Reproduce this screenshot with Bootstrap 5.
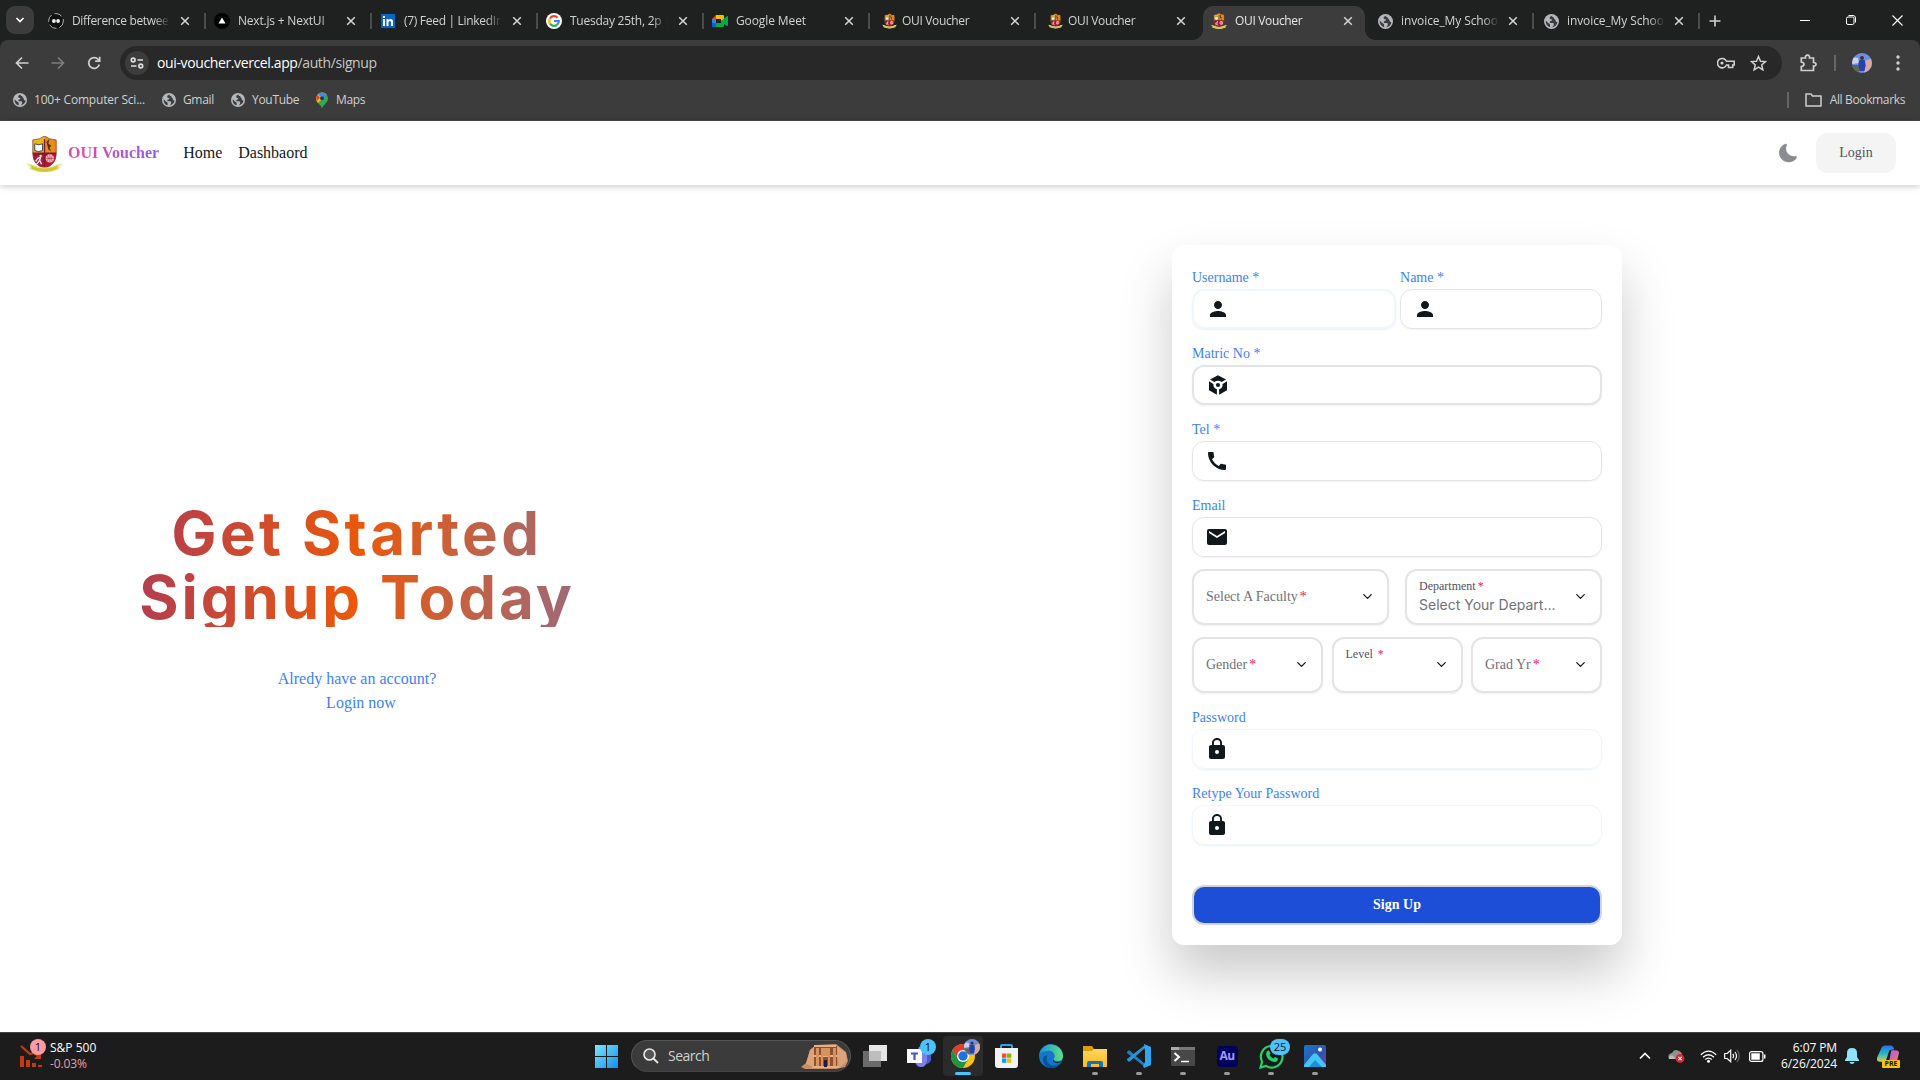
<!DOCTYPE html>
<html lang="en">
<head>
<meta charset="utf-8">
<title>OUI Voucher</title>
<link rel="stylesheet" href="https://cdn.jsdelivr.net/npm/bootstrap@5.3.0/dist/css/bootstrap.min.css">
<style>
  body{width:1920px;height:1080px;overflow:hidden;background:#fff;font-family:"Liberation Serif",serif;color:#11181c}
  svg{display:block;flex:none}
  .ui{font-family:"Open Sans","Noto Sans",sans-serif;font-size:12px;line-height:16px}
  /* browser chrome */
  .strip{height:40px;background:#1f2120;color:#d0d3d2}
  .tabsearch{width:28px;height:28px;border-radius:9px;background:#3c3c3c;margin:0 4px 0 6px}
  .tab-item{width:166px;height:34px;padding:0 14px 4px 10px;position:relative}
  .tab-item + .tab-item::before,.tab-end::before{content:"";position:absolute;left:0;top:7px;width:1.5px;height:16px;background:#4a4b4b}
  .tab-item.active-tab{background:#3c3c3c;border-radius:10px 10px 0 0;margin:0 1px 0 3px;padding-left:8px;padding-right:12px;width:162px;color:#e8e8e8}
  .tab-item.active-tab::before{display:none}
  .tab-item.active-tab::after{content:"";position:absolute;left:-10px;right:-10px;bottom:0;height:10px;background:radial-gradient(circle at 0 0,transparent 9.5px,#3c3c3c 10px) left/10px 10px no-repeat,radial-gradient(circle at 100% 0,transparent 9.5px,#3c3c3c 10px) right/10px 10px no-repeat}
  .tab-item.plain-edge::before{display:none}
  .tab-title{width:98px;margin-left:8px;white-space:nowrap;overflow:hidden;letter-spacing:-.34px;-webkit-mask-image:linear-gradient(90deg,#000 84%,transparent)}
  .tab-title.loose{letter-spacing:-.1px;margin-left:8px}
  .toolbar-box{height:46px;background:#3c3c3c;border-radius:8px 8px 0 0;color:#c7c7c7}
  .omni{width:1662px;height:34px;border-radius:17px;background:#282828;font-size:14px;letter-spacing:-.38px}
  .site-btn{width:24px;height:24px;border-radius:12px;background:#3c3c3c}
  .marks{height:35px;background:#3c3c3c;color:#d0d0d0;border-bottom:1px solid #4a4a4a}
  .vline{width:1.5px;height:16px;background:#656565}
  /* site header */
  .site-nav{height:64px;box-shadow:0 1px 7px rgba(0,0,0,.24);font-size:16px}
  .brand-text{font-weight:700;font-size:16px;background:linear-gradient(90deg,#ec4899,#8b5cf6);-webkit-background-clip:text;background-clip:text;color:transparent}
  .login-btn{width:80px;height:40px;border-radius:12px;background:#f4f4f5;color:#52525b;font-size:14px;padding-bottom:2px}
  .page-main{height:847px}
  .hero-col{width:714px}
  .hero-title{font:700 60px/64px Inter,sans-serif;letter-spacing:2.950px;height:126px;margin:0;background:linear-gradient(96deg,#b13c53 0,#ea580c 50%,#9d6a79 100%);-webkit-background-clip:text;background-clip:text;color:transparent}
  .hero-title span{letter-spacing:3.350px}
  .blue{color:#3b82f6}
  .form-card{width:450px;height:700px;padding:20px;border-radius:12px;background:#fff;margin:60px 0 0 458px;box-shadow:0 29px 52px rgba(0,0,0,.21)}
  .lbl{height:24px;line-height:24px;padding-top:1px;font-size:14px;color:#3b82f6;display:block}
  .box{height:40px;border-radius:12px;border:1px solid #e4e4e7;padding:0 12px;box-shadow:0 1px 2px rgba(0,0,0,.06)}
  .box-thick{border:2px solid #e4e4e7}
  .box-pale{border-color:#eff6ff}
  .pick{height:56px;border-radius:12px;border:2px solid #e4e4e4;padding:0 12px 2px 12px;box-shadow:0 1px 2px rgba(0,0,0,.06);font-size:14px;color:#71717a;flex:1 1 0;min-width:0}
  .pick i{color:#f31260;font-style:normal;margin-left:2px}
  .mini{font-size:12px;line-height:16px;color:#52525b}
  .signup-btn{height:40px;border-radius:12px;border:2px solid #d4d4d8;background:#1d4ed8;color:#fff;font-weight:700;font-size:14px;margin-top:40px;padding-bottom:2px}
  /* taskbar */
  .taskbar{height:48px;background:#1c1c1c;border-top:1px solid #424242;color:#fff;padding-bottom:1px}
  .cell{width:44px;height:46px;position:relative}
  .run::after{content:"";position:absolute;left:19px;bottom:4px;width:6px;height:3px;border-radius:2px;background:#9a9a9a}
  .lit{width:40px;height:40px;margin:0 2px;border-radius:4px;background:#2b2b2b;position:relative}
  .lit::after{content:"";position:absolute;left:12px;bottom:1px;width:16px;height:3px;border-radius:2px;background:#4cc2ff}
  .tag{position:absolute;background:#4cc2ff;color:#111;font-size:11px;line-height:16px;height:16px;border-radius:8px;text-align:center}
  .searchbox{width:220px;height:32px;border-radius:16px;background:#3b3b3b;border:1px solid #555;border-bottom-color:#444;font-size:14px;color:#d0d0d0;margin:0 12px 0 13px;padding:0 2px 0 11px}
</style>
<script src="https://cdn.jsdelivr.net/npm/bootstrap@5.3.0/dist/js/bootstrap.bundle.min.js"></script>
</head>
<body>
<svg width="0" height="0" class="position-absolute">
  <defs>
    <symbol id="crest" viewBox="0 0 38 37">
      <path d="M7 4Q14 4 19 0Q24 4 31 4V19H7z" fill="#e9b818"/><path d="M19 0Q24 4 31 4V19H19z" fill="#ee8a1c"/>
      <path d="M7 18H31Q31 30 19 33Q7 30 7 18z" fill="#b3163b"/><path d="M7 17h24v2H7zM18.300 3h1.400v28h-1.400z" fill="#7d1c2c"/><path d="M7 4Q14 4 19 0Q24 4 31 4V18Q31 30 19 33Q7 30 7 18z" fill="none" stroke="#8a3a22" stroke-width=".8"/>
      <path d="M9 8l4 1 4-1v7l-4 1-4-1z" fill="#fff" stroke="#31455c" stroke-width="1"/><path d="M21 6l3-3-1 5 3 2-2 2 2 4-3-2-1-4z" fill="#4d3515"/>
      <circle cx="24.500" cy="23" r="4.300" fill="#f3c9cb"/><path d="M20 23h9M24.500 19v8M22 20q2 3 0 6M27 20q-2 3 0 6" stroke="#b3163b" stroke-width=".6" fill="none"/>
      <circle cx="15" cy="20.500" r="1.200" fill="#fff"/><path d="M15 22l-3 1-2 3M15 22l-1 3 2 4M14 25l-3 4" stroke="#fff" stroke-width="1.300" fill="none"/>
      <path d="M0 28l6 1q13 7 26 0l6-1-4 4 1 2q-16 7-32 0l1-2z" fill="#e9e5a4"/><path d="M5 30q14 7 28 0l-1 4q-13 6-26 0z" fill="#d1c824"/>
    </symbol>
    <symbol id="globe" viewBox="0 0 16 16"><circle cx="8" cy="8" r="8" fill="#b4b8bd"/><path d="M9 1.800Q5.500 2.500 6 4.500q.5 1.500 2.500 1 0 2-2 2.300-1 .7 0 1.700h2.700q1.300 0 1.300 1.500 0 2-2 3.200 5-.6 5.800-5.500-1.800 0-2-1.500.2-1.800-1.300-2 0-1.800-1.500-1.700-1.500-.3-.5-1.700zM1.700 7l3.500 3.200q1.500.3 1.300 2v1.900Q2 13 1.700 7z" fill="#3c3c3c"/></symbol>
    <symbol id="cross" viewBox="0 0 10 10"><path d="M1.200 1.200l7.600 7.600M8.800 1.200L1.200 8.800" stroke="#d6d6d6" stroke-width="1.500"/></symbol>
    <symbol id="chev" viewBox="0 0 24 24"><path d="M6 9l6 6 6-6" fill="none" stroke="#11181c" stroke-width="2" stroke-linecap="round" stroke-linejoin="round"/></symbol>
    <symbol id="person" viewBox="0 0 24 24"><path d="M12 12c2.210 0 4-1.790 4-4s-1.790-4-4-4-4 1.790-4 4 1.790 4 4 4zm0 2c-2.670 0-8 1.340-8 4v2h16v-2c0-2.660-5.330-4-8-4z"/></symbol>
    <symbol id="lock" viewBox="0 0 24 24"><path fill-rule="evenodd" d="M18 8h-1V6c0-2.760-2.240-5-5-5S7 3.240 7 6v2H6c-1.100 0-2 .9-2 2v10c0 1.100.9 2 2 2h12c1.100 0 2-.9 2-2V10c0-1.100-.9-2-2-2zm-6 9a2 2 0 110-4 2 2 0 010 4zm3.100-9H8.900V6a3.100 3.100 0 016.200 0v2z"/></symbol>
    <linearGradient id="gb" x2="1" y2="1"><stop stop-color="#7ae7ff"/><stop offset="1" stop-color="#0f8fee"/></linearGradient>
    <linearGradient id="ge" x2="1" y2="0"><stop stop-color="#1b8fe0"/><stop offset="1" stop-color="#5fe27a"/></linearGradient>
    <linearGradient id="gy" x2="0" y2="1"><stop stop-color="#ffd75e"/><stop offset="1" stop-color="#f9bb24"/></linearGradient>
    <linearGradient id="gp" x2="1" y2="1"><stop stop-color="#1777cf"/><stop offset=".6" stop-color="#3454a8"/><stop offset="1" stop-color="#7d3a9e"/></linearGradient>
    <linearGradient id="gc" x2="0" y2="1"><stop stop-color="#2a6cf0"/><stop offset=".5" stop-color="#20b8c8"/><stop offset="1" stop-color="#d6d04c"/></linearGradient>
    <linearGradient id="gm" x2="1" y2="1"><stop stop-color="#a05af5"/><stop offset="1" stop-color="#f47a6c"/></linearGradient>
    <symbol id="face" viewBox="0 0 20 20"><clipPath id="fc"><circle cx="10" cy="10" r="10"/></clipPath><g clip-path="url(#fc)"><path fill="#6d8fe0" d="M0 0h20v20H0z"/><path fill="#c9d4ee" d="M0 4l6 1 1 5-7 1z"/><path fill="#d7a9a6" d="M13 8l7-3v15h-8z"/><path fill="#63655c" d="M0 12h7v8H0z"/><circle cx="10" cy="5" r="2" fill="#4a2a33"/><path fill="#2742a8" d="M7 7.500q3-1.500 6 0l.7 5-1.200 5.500h-5l-1.200-5.500z"/></g></symbol>
  </defs>
</svg>

<div class="d-flex flex-column h-100">
  <div class="strip ui d-flex align-items-end flex-shrink-0">
    <div class="d-flex align-items-center align-self-center"><div class="tabsearch d-flex align-items-center justify-content-center"><svg width="10" height="10" viewBox="0 0 10 10"><path d="M1.500 3l3.500 3.500L8.500 3" fill="none" stroke="#fff" stroke-width="1.700"/></svg></div></div>
    <div class="d-flex">
      <div class="tab-item d-flex align-items-center plain-edge"><svg width="16" height="16" viewBox="0 0 16 16"><circle cx="8" cy="8" r="7.400" fill="#111" stroke="#aaa" stroke-dasharray="8 3"/><circle cx="5.900" cy="8" r="1.900" fill="#eee"/><circle cx="10.100" cy="8" r="1.900" fill="#eee"/></svg><span class="tab-title">Difference betwee</span><svg class="ms-auto" width="10" height="10"><use href="#cross"/></svg></div>
      <div class="tab-item d-flex align-items-center"><svg width="16" height="16" viewBox="0 0 16 16"><circle cx="8" cy="8" r="8" fill="#000"/><path d="M8 4.500l3.500 6h-7z" fill="#fff"/></svg><span class="tab-title" style="letter-spacing:-.2px">Next.js + NextUI</span><svg class="ms-auto" width="10" height="10"><use href="#cross"/></svg></div>
      <div class="tab-item d-flex align-items-center"><svg width="16" height="16" viewBox="0 0 16 16"><path fill="#0a66c2" d="M1 1h14v14H1z"/><path fill="#fff" d="M3 6h2v7H3zM3 3h2v2H3zM6.500 6h2v1q2.500-2.200 4.500.5V13h-2V9q-1-2.200-2.500 0v4h-2z"/></svg><span class="tab-title" style="letter-spacing:-.3px">(7) Feed | LinkedIn</span><svg class="ms-auto" width="10" height="10"><use href="#cross"/></svg></div>
      <div class="tab-item d-flex align-items-center"><svg width="16" height="16" viewBox="0 0 16 16"><circle cx="8" cy="8" r="8" fill="#fff"/><g fill="none" stroke-width="2.200"><path d="M11.500 4.700A4.800 4.800 0 004 5.300" stroke="#ea4335"/><path d="M4 5.300a4.800 4.800 0 000 5.400" stroke="#fbbc05"/><path d="M4 10.700a4.800 4.800 0 007.200.9" stroke="#34a853"/><path d="M11.200 11.600Q13 10 12.800 8H8" stroke="#4285f4"/></g></svg><span class="tab-title" style="letter-spacing:-.25px">Tuesday 25th, 2p |</span><svg class="ms-auto" width="10" height="10"><use href="#cross"/></svg></div>
      <div class="tab-item d-flex align-items-center"><svg width="16" height="16" viewBox="0 0 16 16"><path fill="#ea4335" d="M0 6l4-4v4z"/><path fill="#2684fc" d="M0 6h4v4H0z"/><path fill="#0066da" d="M0 10h4v4H1q-1 0-1-1z"/><path fill="#ffba00" d="M4 2h7q1 0 1 1v4L9 8V6H4z"/><path fill="#00ac47" d="M4 14v-4h5V8l6-5q1 0 1 1v8q0 1-1 1l-3-2v2q0 1-1 1z"/></svg><span class="tab-title" style="letter-spacing:-.1px">Google Meet</span><svg class="ms-auto" width="10" height="10"><use href="#cross"/></svg></div>
      <div class="tab-item d-flex align-items-center"><svg class="ms-1" style="margin-right:-3px" width="15" height="18"><use href="#crest"/></svg><span class="tab-title" style="width:97px">OUI Voucher</span><svg class="ms-auto" width="10" height="10"><use href="#cross"/></svg></div>
      <div class="tab-item d-flex align-items-center"><svg class="ms-1" style="margin-right:-3px" width="15" height="18"><use href="#crest"/></svg><span class="tab-title" style="width:97px">OUI Voucher</span><svg class="ms-auto" width="10" height="10"><use href="#cross"/></svg></div>
      <div class="tab-item active-tab d-flex align-items-center"><svg width="16" height="18"><use href="#crest"/></svg><span class="tab-title">OUI Voucher</span><svg class="ms-auto" width="10" height="10"><use href="#cross"/></svg></div>
      <div class="tab-item d-flex align-items-center plain-edge"><svg style="margin-left:2px" width="15" height="15"><use href="#globe"/></svg><span class="tab-title loose">invoice_My Schoo</span><svg class="ms-auto" width="10" height="10"><use href="#cross"/></svg></div>
      <div class="tab-item d-flex align-items-center"><svg style="margin-left:2px" width="15" height="15"><use href="#globe"/></svg><span class="tab-title loose">invoice_My Schoo</span><svg class="ms-auto" width="10" height="10"><use href="#cross"/></svg></div>
      <div class="tab-end position-relative d-flex align-items-center pb-1" style="padding-left:7px"><svg class="ms-1" width="12" height="12" viewBox="0 0 12 12"><path d="M6 .5v11M.5 6h11" stroke="#d0d0d0" stroke-width="1.600"/></svg></div>
    </div>
    <div class="d-flex align-items-center align-self-center ms-auto me-3" style="gap:36px;padding-right:1px">
      <svg width="10" height="10" viewBox="0 0 10 10"><path d="M0 5.500h10" stroke="#fff"/></svg>
      <svg width="10" height="10" viewBox="0 0 10 10"><g fill="none" stroke="#fff"><rect x=".5" y="2" width="7.500" height="7.500" rx="1.500"/><path d="M2.500.5H7Q9.500.5 9.500 3v4.500"/></g></svg>
      <svg width="11" height="11" viewBox="0 0 11 11"><path d="M.5.5l10 10M10.500.5l-10 10" stroke="#fff" stroke-width="1.100"/></svg>
    </div>
  </div>
  <div style="background:#1f2120" class="flex-shrink-0">
    <div class="toolbar-box ui d-flex align-items-center">
      <svg style="margin-left:15px" width="14" height="14" viewBox="0 0 14 14"><path d="M13.500 7H1.500M7 1.500L1.500 7 7 12.500" fill="none" stroke="#d0d0d0" stroke-width="1.700"/></svg>
      <svg style="margin-left:22px" width="14" height="14" viewBox="0 0 14 14"><path d="M.5 7h12M7 1.500L12.500 7 7 12.500" fill="none" stroke="#7d7d7d" stroke-width="1.700"/></svg>
      <svg style="margin-left:22px" width="14" height="14" viewBox="0 0 14 14"><path d="M12.300 8.500A5.400 5.400 0 1111 3.200L12.300 4.700M12.700.7v4.500H8.200" fill="none" stroke="#d0d0d0" stroke-width="1.700"/></svg>
      <div class="omni d-flex align-items-center" style="margin-left:19px;padding:0 4px 0 5px">
        <div class="site-btn d-flex align-items-center justify-content-center"><svg width="14" height="12" viewBox="0 0 14 12"><g fill="none" stroke="#e0e0e0" stroke-width="1.600"><circle cx="3.200" cy="3" r="1.900"/><path d="M7.500 3H13M1 9h5.500"/><circle cx="10.800" cy="9" r="1.900"/></g></svg></div>
        <span class="text-white ms-2">oui-voucher.vercel.app<span style="color:#c4c7c5">/auth/signup</span></span>
        <svg class="ms-auto" width="18" height="12" viewBox="0 0 18 12"><path d="M9.500 4.300A4.700 4.700 0 109.500 8H11.500v2.500h4.200V8H17.200V4.300z" fill="none" stroke="#d0d0d0" stroke-width="1.600"/><circle cx="5" cy="6" r="1.600" fill="#d0d0d0"/></svg>
        <svg style="margin:0 11px 0 15px" width="17" height="16" viewBox="0 0 17 16"><path d="M8.500 1.500l2 4.700 5 .4-3.800 3.300 1.200 5-4.400-2.700-4.400 2.700 1.200-5L1.500 6.600l5-.4z" fill="none" stroke="#d0d0d0" stroke-width="1.500"/></svg>
      </div>
      <svg style="margin-left:18px" width="17" height="18" viewBox="0 0 17 18"><path d="M1.300 4H5.500Q5 1.200 7.500 1.200T9.500 4h4v4.500Q16 8.500 16 10.300T13.500 12v4.500H1.300V12.500Q4 12 4 10.200T1.300 8z" fill="none" stroke="#d0d0d0" stroke-width="1.700"/></svg>
      <div class="vline" style="margin-left:17px"></div>
      <svg style="margin-left:16px" width="20" height="20"><use href="#face"/></svg>
      <svg style="margin-left:24px" width="4" height="16" viewBox="0 0 4 16" fill="#d0d0d0"><circle cx="2" cy="2" r="1.700"/><circle cx="2" cy="8" r="1.700"/><circle cx="2" cy="14" r="1.700"/></svg>
    </div>
    <div class="marks ui d-flex pt-1 pe-3">
      <div class="d-flex align-items-center" style="height:20px;margin-left:13px">
        <svg width="14" height="14"><use href="#globe"/></svg><span style="margin-left:7px;width:111px;letter-spacing:-.2px" class="text-nowrap">100+ Computer Sci...</span>
        <svg style="margin-left:17px" width="14" height="14"><use href="#globe"/></svg><span style="margin-left:7px;width:31px;letter-spacing:-.35px">Gmail</span>
        <svg style="margin-left:17px" width="14" height="14"><use href="#globe"/></svg><span style="margin-left:7px;width:46px;letter-spacing:-.3px">YouTube</span>
        <svg style="margin-left:18px" width="12" height="17" viewBox="0 0 12 16"><path d="M6 0a6 6 0 00-6 6q0 2 2 4.500Q5 13 6 16q1-3 4-5.500 2-2.500 2-4.500A6 6 0 006 0z" fill="#34a853"/><path d="M1.500 2.200A6 6 0 0110.700 2L2 10.500Q0 8 0 6z" fill="#fbbc04"/><path d="M1.500 2.200L4 5 1 8.500Q-.8 5 1.500 2.200z" fill="#ea4335"/><path d="M2 1.600A6 6 0 0110.700 2.200L8 5.500 4.500 4z" fill="#4285f4"/><circle cx="6" cy="5.800" r="2" fill="#223b66"/></svg><span style="margin-left:8px;letter-spacing:-.35px">Maps</span>
      </div>
      <div class="d-flex align-items-center ms-auto" style="height:20px;margin-right:-1px"><div class="vline"></div><svg style="margin:0 8px 0 16px" width="17" height="14" viewBox="0 0 17 14"><path d="M1 1h5l1.500 2H16v10H1z" fill="none" stroke="#d0d0d0" stroke-width="1.500" stroke-linejoin="round"/></svg><span style="letter-spacing:-.36px">All Bookmarks</span></div>
    </div>
  </div>

  <nav class="site-nav d-flex align-items-center flex-shrink-0 bg-white position-relative">
    <svg style="margin-left:26px;margin-top:1px" width="37" height="36"><use href="#crest"/></svg>
    <span class="brand-text" style="margin-left:5px">OUI Voucher</span>
    <span style="margin-left:24px">Home</span><span class="ms-3">Dashbaord</span>
    <svg class="ms-auto" width="22" height="22" viewBox="0 0 24 24" style="margin-right:17px"><path fill="#8b8b93" d="M21.530 15.930c-.16-.27-.61-.69-1.730-.49-.62.110-1.250.16-1.880.130a8.410 8.410 0 01-5.910-2.820c-1.300-1.450-2.100-3.340-2.110-5.380 0-1.140.22-2.240.67-3.280.44-1.010.130-1.540-.090-1.760-.23-.23-.77-.55-1.830-.110-4.090 1.720-6.620 5.820-6.320 10.210.3 4.130 3.200 7.660 7.040 8.990.92.320 1.890.51 2.890.55.160.010.320.020.48.020 3.350 0 6.490-1.580 8.470-4.270.67-.93.490-1.520.32-1.790z"/></svg>
    <span class="login-btn d-flex align-items-center justify-content-center" style="margin-right:24px">Login</span>
  </nav>

  <main class="page-main d-flex flex-shrink-0">
    <section class="hero-col text-center d-flex flex-column align-items-center">
      <h1 class="hero-title" style="margin-top:316px"><span>Get Started</span><br>Signup Today</h1>
      <div class="blue" style="margin-top:40px;line-height:24px"><div>Alredy have an account?</div><div class="ps-2">Login now</div></div>
    </section>
    <form class="form-card">
      <div class="d-flex gap-1 mb-2 pb-1">
        <div style="flex:1.01 1 0"><label class="lbl">Username *</label><div class="box box-thick box-pale d-flex align-items-center"><svg width="24" height="24" fill="#11181c"><use href="#person"/></svg></div></div>
        <div style="flex:1 1 0"><label class="lbl">Name *</label><div class="box d-flex align-items-center"><svg width="24" height="24" fill="#11181c"><use href="#person"/></svg></div></div>
      </div>
      <div class="mb-2 pb-1"><label class="lbl">Matric No *</label><div class="box box-thick d-flex align-items-center"><svg width="24" height="24" viewBox="0 0 24 24" fill="#11181c"><path d="M12 2.200l8 4.400-4.300 2.500Q12 6.500 8.300 9.100L4 6.600zM3 8.300l4.400 2.600Q7.200 15 10.900 16.300v5.400L3 17.300zM21 8.300v9l-7.900 4.400v-5.400Q16.800 15 16.600 10.900z"/><circle cx="12" cy="12" r="2.100"/></svg></div></div>
      <div class="mb-2 pb-1"><label class="lbl">Tel *</label><div class="box d-flex align-items-center"><svg width="24" height="24" viewBox="0 0 24 24" fill="#11181c"><path d="M20.010 15.380c-1.230 0-2.420-.2-3.530-.56a.98.98 0 00-1.010.24l-1.570 1.970c-2.830-1.350-5.480-3.900-6.890-6.830l1.950-1.660c.27-.28.35-.67.24-1.020-.37-1.110-.56-2.300-.56-3.530 0-.54-.45-.99-.99-.99H4.190C3.650 3 3 3.240 3 3.990 3 13.280 10.730 21 20.010 21c.71 0 .99-.63.99-1.180v-3.450c0-.54-.45-.99-.99-.99z"/></svg></div></div>
      <div class="mb-2 pb-1"><label class="lbl">Email</label><div class="box d-flex align-items-center"><svg width="24" height="24" viewBox="0 0 24 24" fill="#11181c"><path d="M20 4H4c-1.100 0-1.990.9-1.990 2L2 18c0 1.100.9 2 2 2h16c1.100 0 2-.9 2-2V6c0-1.100-.9-2-2-2zm0 4l-8 5-8-5V6l8 5 8-5v2z"/></svg></div></div>
      <div class="d-flex gap-3 mb-2 pb-1">
        <div class="pick d-flex align-items-center"><span>Select A Faculty<i>*</i></span><svg class="ms-auto" width="15" height="15"><use href="#chev"/></svg></div>
        <div class="pick d-flex align-items-center"><div class="lh-1"><div class="mini">Department<i>*</i></div><div style="font:14px/21px Inter,sans-serif" class="text-nowrap">Select Your Depart...</div></div><svg class="ms-auto" width="15" height="15"><use href="#chev"/></svg></div>
      </div>
      <div class="d-flex mb-2 pb-1" style="gap:8.500px">
        <div class="pick d-flex align-items-center"><span>Gender<i>*</i></span><svg class="ms-auto" width="15" height="15"><use href="#chev"/></svg></div>
        <div class="pick d-flex align-items-center"><span class="mini align-self-start" style="margin-top:7px">Level <i>*</i></span><svg class="ms-auto" width="15" height="15"><use href="#chev"/></svg></div>
        <div class="pick d-flex align-items-center"><span>Grad Yr<i>*</i></span><svg class="ms-auto" width="15" height="15"><use href="#chev"/></svg></div>
      </div>
      <div class="mb-2 pb-1"><label class="lbl">Password</label><div class="box box-pale d-flex align-items-center"><svg width="24" height="24" fill="#11181c"><use href="#lock"/></svg></div></div>
      <div><label class="lbl">Retype Your Password</label><div class="box box-pale d-flex align-items-center"><svg width="24" height="24" fill="#11181c"><use href="#lock"/></svg></div></div>
      <div class="signup-btn d-flex align-items-center justify-content-center">Sign Up</div>
    </form>
  </main>

  <footer class="taskbar ui d-flex align-items-center flex-shrink-0">
    <div class="position-relative" style="margin-left:20px"><svg width="24" height="24" viewBox="0 0 24 24"><path d="M1 2l9 8 4-1 6 4" fill="none" stroke="#c43a10" stroke-width="2.200"/><path d="M21 8v7h-7z" fill="#c43a10"/><path fill="#c43a10" d="M0 12h4v11H0zM6 16h4v7H6zM12 19h4v4h-4zM18 21h4v2h-4z"/></svg><span class="tag" style="left:10px;top:-5px;width:16px;background:#ff99a4">1</span></div>
    <div style="margin-left:6px;width:61px"><div>S&amp;P 500</div><div style="color:#f19aa6;letter-spacing:-.1px">-0.03%</div></div>
    <svg style="margin-left:484px" width="23" height="23" viewBox="0 0 23 23"><path fill="url(#gb)" d="M0 0h11v11H0zM12 0h11v11H12zM0 12h11v11H0zM12 12h11v11H12z"/></svg>
    <div class="searchbox d-flex align-items-center"><svg width="16" height="16" viewBox="0 0 16 16"><circle cx="6.500" cy="6.500" r="5.500" fill="#555" stroke="#e8e8e8" stroke-width="1.600"/><path d="M10.500 10.500l4.500 4.500" stroke="#e8e8e8" stroke-width="1.800"/></svg><span style="margin-left:9px;letter-spacing:-.5px">Search</span>
      <svg class="ms-auto" width="47" height="26" viewBox="0 0 47 26"><path d="M0 24l5-4L9 7l6-5 20-1 10 8 2 9-3 6-9 2H4z" fill="#c98d68"/><path d="M9 7l5-4-1 21-8-3zM36 3l9 7 1 8-8 7z" fill="#dca37c"/><path d="M13 3h23v21H13z" fill="#8f5030"/><path d="M12 12h25v2H12zM13 2h22v2H13zM11 23h27v2H11z" fill="#e7b083"/><path d="M15 5h3v18h-3zM20 5h2v18h-2zM27 5h2v18h-2zM32 5h3v18h-3z" fill="#d6935e"/><path d="M22 5h5l1 8h-7z" fill="#d6935e"/><path d="M23 17h3v7h-3z" fill="#251a3c"/></svg></div>
    <svg width="24" height="22" viewBox="0 0 24 22"><path fill="#6b6b6b" d="M0 6h18v16H0z"/><path fill="#e6e6e6" d="M6 0h18v16H6z"/><path fill="#bdbdbd" d="M6 6h12v10H6z"/></svg>
    <div class="d-flex align-items-center" style="margin-left:10px">
      <div class="cell d-flex align-items-center justify-content-center"><svg width="25" height="24" viewBox="0 0 25 24"><circle cx="15" cy="6" r="4" fill="#7b83eb"/><path fill="#5059c9" d="M17 9h7v7q-1 4-6 4z"/><path fill="#7b83eb" d="M8 9h12v8q-1 6-6 6t-6-6z"/><path fill="#fff" d="M0 5h15v14H0z"/><path fill="#4b53bc" d="M4 8.500h7v2H8.600V16H6.400v-5.500H4z"/></svg><span class="tag" style="left:23px;top:6px;width:16px">1</span></div>
      <div class="lit d-flex align-items-center justify-content-center"><svg width="24" height="24" viewBox="0 0 24 24"><circle cx="12" cy="12" r="12" fill="#fbc116"/><path fill="#e33b2e" d="M1.600 6A12 12 0 0122.400 6H12L7 15z"/><path fill="#229342" d="M1.600 6A12 12 0 0012 24l5.200-9-9.500 1z"/><circle cx="12" cy="12" r="6" fill="#fff"/><circle cx="12" cy="12" r="4.700" fill="#1a73e8"/></svg><svg class="position-absolute" style="left:21px;top:3px" width="16" height="16"><use href="#face"/></svg></div>
      <div class="cell d-flex align-items-center justify-content-center" style="padding-right:2px"><svg width="23" height="24" viewBox="0 0 23 24"><path d="M6 6V2q0-1 1-1h9q1 0 1 1v4" fill="none" stroke="#28a8ea" stroke-width="2"/><path d="M0 4h23v17q0 3-3 3H3q-3 0-3-3z" fill="#f2f2f2"/><path fill="#f25022" d="M7 9.500h4.300v4.300H7z"/><path fill="#7fba00" d="M12 9.500h4.300v4.300H12z"/><path fill="#00a4ef" d="M7 14.500h4.300v4.300H7z"/><path fill="#ffb900" d="M12 14.500h4.300v4.300H12z"/></svg></div>
      <div class="cell d-flex align-items-center justify-content-center"><svg width="24" height="24" viewBox="0 0 24 24"><circle cx="12" cy="12" r="12" fill="#1476c8"/><path fill="url(#ge)" d="M.3 10A12 12 0 0124 12q0 5-5.500 5-4 0-4-2 1.500-1.500 1-4Q14 6 8 7 2 8 .3 10z"/><path fill="#0c4f9a" d="M8.500 11Q6 16 10 20t11-1q-4 5-10 5Q4 22 4 15q0-3 4.500-4z"/><path fill="#1c1c1c" d="M14.500 15Q13 18.500 18 19q3 0 5-2-2 1-4.500 1-4 0-4-3z"/></svg></div>
      <div class="cell run d-flex align-items-center justify-content-center"><svg width="24" height="22" viewBox="0 0 24 22"><path fill="#dd9a09" d="M0 1h9l2 3h13v5H0z"/><path fill="url(#gy)" d="M0 6h9l2-2h13v18H0z"/><path fill="#1272bb" d="M4 22v-4q0-2 2-2h12q2 0 2 2v4h-4v-3H8v3z"/></svg></div>
      <div class="cell run d-flex align-items-center justify-content-center"><svg width="24" height="24" viewBox="0 0 24 24"><path fill="#1c80c4" d="M0 8l2-2 16 14v3L0 9z"/><path fill="#2596d8" d="M0 16l2 2L18 4V1L0 15z"/><path fill="#30a6ee" d="M17 0l7 3v18l-7 3-1-2 2-4V7z"/></svg></div>
      <div class="cell run d-flex align-items-center justify-content-center"><svg width="24" height="19" viewBox="0 0 24 19"><rect width="24" height="19" rx="1" fill="#484848"/><path fill="#aaa" d="M0 0h8v3H0z"/><path fill="#777" d="M8 0h16v3H8z"/><path d="M3.500 6L8 10l-4.500 4" fill="none" stroke="#fff" stroke-width="2"/><path d="M10 14.500h8" stroke="#fff" stroke-width="1.500"/></svg></div>
      <div class="cell run d-flex align-items-center justify-content-center"><span style="width:21px;height:21px;border-radius:4px;background:#00005b;color:#9d9bff;font:700 12px/20px 'Open Sans',sans-serif;text-align:center;letter-spacing:-.5px">Au</span></div>
      <div class="cell run d-flex align-items-center justify-content-center"><svg width="25" height="25" viewBox="0 0 25 25"><path d="M1.500 23.500l1.600-5.800A10.800 10.800 0 117 21.900z" fill="#1c1c1c" stroke="#25d366" stroke-width="2.200"/><path d="M8 7l2-.5 1.500 3-1 1.500q1 2.500 4 3.500l1.500-1.500 3 1.500q0 3-3 3.500Q8 17 7 10z" fill="#25d366"/></svg><span class="tag" style="left:21px;top:6px;width:20px">25</span></div>
      <div class="cell run d-flex align-items-center justify-content-center"><svg width="22" height="22" viewBox="0 0 22 22"><rect width="22" height="22" rx="1.500" fill="url(#gp)"/><circle cx="16" cy="4.500" r="2" fill="#fff"/><path d="M0 20L9 9q2-1.500 4 0l9 11v2H0z" fill="#43c6f5"/><path d="M5 22l6-7 7 7z" fill="#1c8fd8"/></svg></div>
    </div>
    <svg style="margin-left:302px" width="12" height="8" viewBox="0 0 12 8"><path d="M1 6.500l5-5 5 5" fill="none" stroke="#fff" stroke-width="1.700"/></svg>
    <svg style="margin-left:17px" width="17" height="14" viewBox="0 0 17 14"><path d="M1 10Q-1 5 4 4q2-5 7-2 5 2 2 8z" fill="#8f8f8f"/><path d="M1 10Q0 7 4 6l4 4z" fill="#bbb"/><circle cx="12" cy="9.500" r="4.400" fill="#d52a32"/><path d="M10.300 7.800l3.400 3.400M13.700 7.800l-3.400 3.400" stroke="#fff" stroke-width="1.200"/></svg>
    <svg style="margin-left:15px" width="17" height="13" viewBox="0 0 17 13"><g fill="none" stroke="#fff" stroke-width="1.300"><path d="M.8 4.800Q8.500-2.500 16.200 4.800M3 7.300q5.500-5 11 0M5.200 9.600q3.300-3 6.600 0"/></g><circle cx="8.500" cy="11.300" r="1.500" fill="#fff"/></svg>
    <svg style="margin-left:7px" width="16" height="14" viewBox="0 0 16 14"><g fill="none" stroke="#fff" stroke-width="1.200"><path d="M.7 4.500h2.500l3.500-3.300v11.600L3.200 9.500H.7zM8.800 4.800q1.500 2.200 0 4.400M11 3q3 4 0 8"/><path d="M13 1q4.500 6 0 12" stroke="#666"/></g></svg>
    <svg style="margin-left:9px" width="17" height="11" viewBox="0 0 17 11"><rect x=".6" y=".6" width="13.300" height="9.800" rx="2" fill="none" stroke="#fff" stroke-width="1.200"/><path fill="#fff" d="M2.300 2.300h8.500v6.400H2.300zM15 3.500h1.500v4H15z"/></svg>
    <div class="text-end" style="margin-left:5px;width:66px"><div style="letter-spacing:-.1px">6:07 PM</div><div style="letter-spacing:-.1px" class="text-nowrap">6/26/2024</div></div>
    <svg style="margin-left:8px" width="14" height="16" viewBox="0 0 14 16"><path fill="#8fe3fb" d="M7 0Q2 0 2 5v4l-2 3v1h14v-1l-2-3V5q0-5-5-5zM4.500 14h5Q9 16 7 16t-2.500-2z"/></svg>
    <div class="position-relative" style="margin-left:18px;top:-2px"><svg width="22" height="19" viewBox="0 0 23 19"><path fill="url(#gc)" d="M5 2q1-2 4-2h5q3 0 4 4l-5 1-3 9q-1 3-4 3H3q-4 0-3-4z"/><path fill="url(#gm)" d="M15 5h4q4 0 4 3l-2 8q-1 3-4 3H9q3 0 4-4z"/></svg><span class="tag" style="left:5px;top:15px;width:18px;height:8px;border-radius:1px;background:#fcc30b;font-size:7px;line-height:8px;font-weight:700">PRE</span></div>
  </footer>
</div>
</body>
</html>
